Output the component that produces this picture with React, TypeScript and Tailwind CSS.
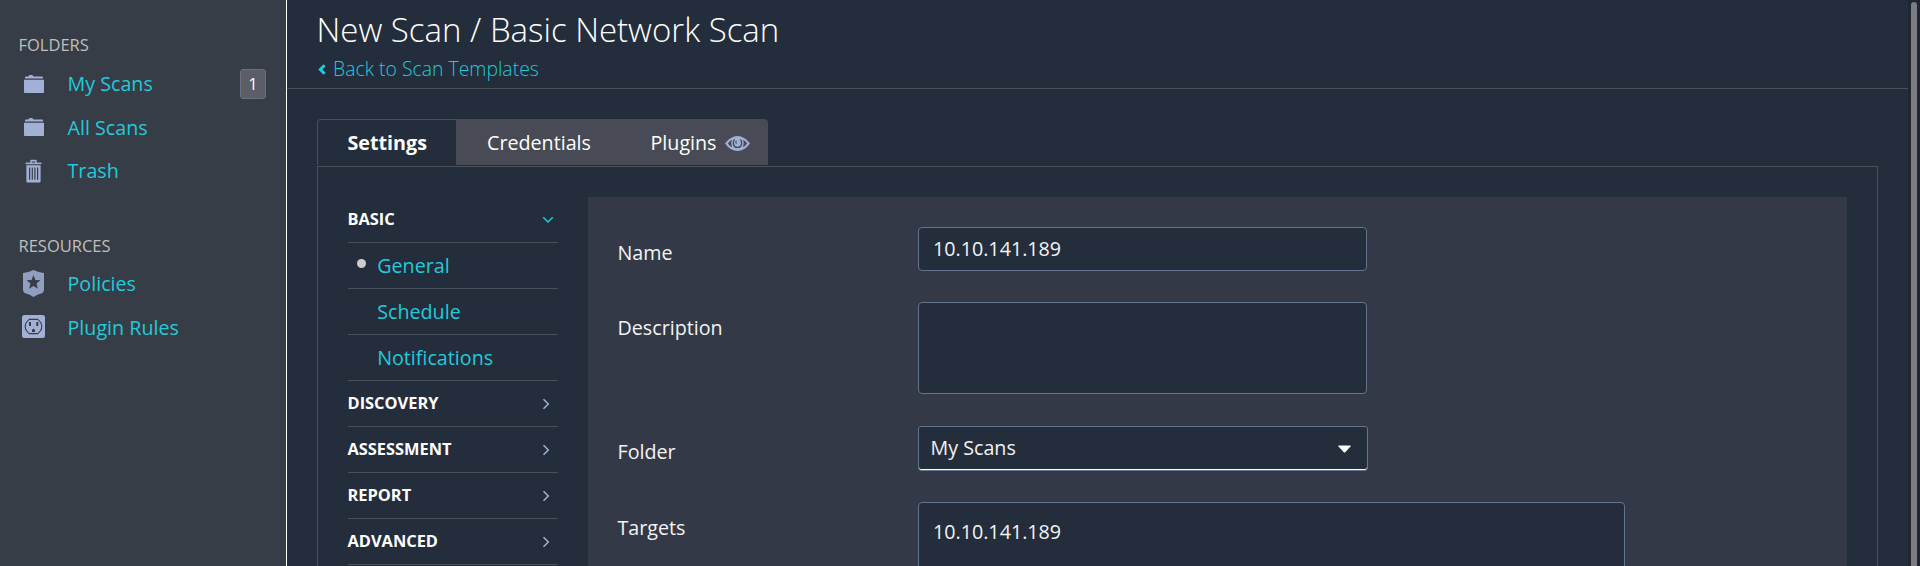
import type { ReactNode } from "react";

function FolderIcon() {
  return (
    <svg width="20" height="18" viewBox="0 0 20 18" fill="#a3b0d6">
      <path d="M1 3.6V2.2Q1 1.4 1.8 1.4H4.2L5 .4Q5.3 0 5.8 0H8Q8.6 0 8.9.5L9.4 1.4H18.2Q19 1.4 19 2.2V3.6Z" />
      <path d="M0 4.8H20V17.2Q20 18 19.2 18H.8Q0 18 0 17.2Z" />
    </svg>
  );
}

function TrashIcon() {
  return (
    <svg className="-ml-px" width="17" height="24" viewBox="0 0 17 24" fill="#a3b0d6">
      <path d="M5.2 4V2.2Q5.2.8 6.6.8H10.4Q11.8.8 11.8 2.2V4H10.3V2.4H6.7V4Z" />
      <path d="M.6 3.6H16.4V5.2H.6Z" />
      <path
        fillRule="evenodd"
        d="M1.4 6.2H15.6V22.6Q15.6 23.4 14.8 23.4H2.2Q1.4 23.4 1.4 22.6ZM4 8.6V20.8H5.2V8.6ZM6.7 8.6V20.8H7.9V8.6ZM9.3 8.6V20.8H10.5V8.6ZM12 8.6V20.8H13.2V8.6Z"
      />
    </svg>
  );
}

function ShieldIcon() {
  return (
    <svg className="-ml-px" width="21" height="27" viewBox="0 0 21 27" fill="#929ebf">
      <path d="M10.5 0Q15.5 2.5 21 3V19.5Q21 22.4 18 23.6Q13.5 25 10.5 27Q7.5 25 3 23.6Q0 22.4 0 19.5V3Q5.5 2.5 10.5 0Z" />
      <path fill="#373d46" d="M10.5 5L12.4 9.9L17.5 10.2L13.5 13.6L14.9 18.8L10.5 15.9L6.1 18.8L7.5 13.6L3.5 10.2L8.6 9.9Z" />
    </svg>
  );
}

function OutletIcon() {
  return (
    <svg className="mr-[2px] mb-[2px] shrink-0" width="23" height="23" viewBox="0 0 23 23">
      <rect width="23" height="23" rx="2.5" fill="#a3b0d6" />
      <path
        d="M7.3 4.4H15.7Q19.8 7.5 19.8 11.5T15.7 18.6H7.3Q3.2 15.5 3.2 11.5T7.3 4.4Z"
        fill="none"
        stroke="#373d46"
        strokeWidth="1.1"
      />
      <path d="M7 7H9V11H7ZM14.3 7H16.3V11H14.3ZM10 17V15.3Q10 13.8 11.5 13.8T13 15.3V17Z" fill="#373d46" />
    </svg>
  );
}

function EyeIcon() {
  return (
    <svg width="25" height="15" viewBox="0 0 25 15">
      <path d="M0 7.5Q5.5 0 12.5 0T25 7.5Q19.5 15 12.5 15T0 7.5Z" fill="#a3b0d6" />
      <path d="M2.8 7.5Q4.6 5 7 3.8Q5.3 7.5 7 11.2Q4.6 10 2.8 7.5ZM22.2 7.5Q20.4 5 18 3.8Q19.7 7.5 18 11.2Q20.4 10 22.2 7.5Z" fill="#484b55" />
      <path d="M9.6 3.6Q8 5.2 8.4 7.8Q9 11.4 12.5 11.4T16.6 7.8Q17 5.2 15.4 3.6" fill="none" stroke="#484b55" strokeWidth="1.4" />
      <path d="M11.3 4.8Q10.4 6.3 11.4 7.7" fill="none" stroke="#484b55" strokeWidth="1.1" />
    </svg>
  );
}

function SideLink({ icon, label, badge }: { icon: ReactNode; label: string; badge?: string }) {
  return (
    <a className="flex h-[43.5px] items-center pr-5 pl-[22px] text-[#1fcbdc]">
      <span className="flex w-6 justify-center">{icon}</span>
      <span className="ml-[21.5px] flex-1">{label}</span>
      {badge && (
        <span className="flex h-[30px] w-[26px] items-center justify-center rounded-[3px] border border-[#6d6f79] bg-[#5b5d67] text-[16.5px] text-white">
          {badge}
        </span>
      )}
    </a>
  );
}

function NavHeader({ label, open }: { label: string; open?: boolean }) {
  return (
    <div className="flex h-[46px] items-center justify-between border-b border-[#4a4f58] text-[16.4px] font-bold">
      <span className="-ml-[0.5px] pb-[2px]">{label}</span>
      {open ? (
        <svg className="mr-1" width="12" height="8" viewBox="0 0 12 8" fill="none" stroke="#1fcbdc" strokeWidth="1.5">
          <path d="M1.2 1.2L6 6L10.8 1.2" />
        </svg>
      ) : (
        <svg className="mr-[8px]" width="8" height="12" viewBox="0 0 8 12" fill="none" stroke="#a3b0d6" strokeWidth="1.5">
          <path d="M1.5 1.2L6.3 6L1.5 10.8" />
        </svg>
      )}
    </div>
  );
}

function NavItem({ label, active }: { label: string; active?: boolean }) {
  return (
    <a className="flex h-[46px] items-center border-b border-[#4a4f58] pl-[9px] text-[#1fcbdc]">
      <span className={active ? "mb-[4px] size-[9px] rounded-full bg-[#cccccc]" : "size-[9px]"} />
      <span className="ml-[11.2px]">{label}</span>
    </a>
  );
}

function Field({ label, children }: { label: string; children: ReactNode }) {
  return (
    <div className="flex">
      <div className="w-[301px] pt-[4px] pl-[0.5px] leading-[44px]">{label}</div>
      {children}
    </div>
  );
}

export default function App() {
  return (
    <div className="flex h-[566px] w-[1920px] overflow-hidden bg-[#242d3b] font-['Open_Sans',sans-serif] text-[19.7px] leading-[27px] text-[#f3f3f3]">
      <aside className="w-[287px] shrink-0 border-r border-white bg-[#373d46] pt-[34px]">
        <h2 className="mb-[6px] pl-[18.5px] text-[16.5px] leading-[22px] text-[#bfbfbf]">FOLDERS</h2>
        <SideLink icon={<FolderIcon />} label="My Scans" badge="1" />
        <SideLink icon={<FolderIcon />} label="All Scans" />
        <SideLink icon={<TrashIcon />} label="Trash" />
        <h2 className="mt-[42px] mb-[5.5px] pl-[18.5px] text-[16.5px] leading-[22px] text-[#bfbfbf]">RESOURCES</h2>
        <SideLink icon={<ShieldIcon />} label="Policies" />
        <SideLink icon={<OutletIcon />} label="Plugin Rules" />
      </aside>

      <main className="flex w-[1621px] shrink-0 flex-col">
        <header className="h-[89px] shrink-0 border-b border-[#4a4f58] pt-[8px] pl-[29.5px]">
          <h1 className="text-[33px] leading-[44px] font-light text-white">New Scan / Basic Network Scan</h1>
          <a className="mt-[3px] flex items-center text-[19.4px] font-light text-[#1fcbdc]">
            <svg className="mt-[1px] mr-[7.5px] ml-[1px]" width="8" height="11" viewBox="0 0 8 11" fill="none" stroke="#1fcbdc" strokeWidth="3">
              <path d="M6.6 1.2L2.4 5.5L6.6 9.8" />
            </svg>
            Back to Scan Templates
          </a>
        </header>

        <div className="flex flex-1 flex-col pt-[30px] pr-[30px] pl-[30px]">
          <div className="mb-[1px] flex h-[46px] shrink-0 leading-[47px] text-white">
            <div className="w-[139px] rounded-tl-[4px] border-t border-l border-[#4a4f58] pl-[29.5px] leading-[45px] font-bold">Settings</div>
            <div className="flex w-[312px] rounded-tr-[4px] bg-[#484b55] pl-[31px]">
              <span className="w-[163.5px]">Credentials</span>
              <span>Plugins</span>
              <span className="ml-[8px] flex items-center pt-[2px]">
                <EyeIcon />
              </span>
            </div>
          </div>

          <section className="flex h-[420px] border-t border-r border-l border-[#4a4f58] pt-[30px] pr-[30px] pl-[30px]">
            <nav className="mr-[30px] w-[210px] shrink-0 text-white">
              <NavHeader label="BASIC" open />
              <NavItem label="General" active />
              <NavItem label="Schedule" />
              <NavItem label="Notifications" />
              <NavHeader label="DISCOVERY" />
              <NavHeader label="ASSESSMENT" />
              <NavHeader label="REPORT" />
              <NavHeader label="ADVANCED" />
            </nav>

            <div className="flex flex-1 flex-col bg-[#333947] pt-[30px] pl-[29px]">
              <div className="h-[75px]">
                <Field label="Name">
                  <div className="h-[44px] w-[449px] rounded-[4px] border border-[#64748c] bg-[#242d3b] pl-[14px] leading-[41px]">10.10.141.189</div>
                </Field>
              </div>
              <div className="h-[124px]">
                <Field label="Description">
                  <div className="h-[92px] w-[449px] rounded-[4px] border border-[#64748c] bg-[#242d3b]" />
                </Field>
              </div>
              <div className="h-[76px]">
                <Field label="Folder">
                  <div className="flex h-[45px] w-[450px] items-center justify-between rounded-[3px] border border-[#64748c] bg-[#242d3b] pr-[16px] pb-[2px] pl-[11.5px] shadow-[inset_0_-1px_0_#ffffff]">
                    <span>My Scans</span>
                    <svg className="mt-[2px]" width="13" height="8" viewBox="0 0 13 8" fill="#ffffff">
                      <path d="M.5 .5H12.5V1.5L7 7.5H6L.5 1.5Z" />
                    </svg>
                  </div>
                </Field>
              </div>
              <Field label="Targets">
                <div className="h-[84px] w-[707px] rounded-[4px] border border-[#64748c] bg-[#242d3b] pt-[14.5px] pl-[14px]">10.10.141.189</div>
              </Field>
            </div>
          </section>
        </div>
      </main>

      <div className="w-[12px] shrink-0 bg-[#202733] pt-[2px] pl-[3px]">
        <div className="h-[600px] w-[6px] rounded-full bg-[#7b7d83]" />
      </div>
    </div>
  );
}
